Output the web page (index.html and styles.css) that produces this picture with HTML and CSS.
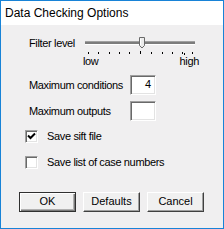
FILE: index.html
```html
<!DOCTYPE html>
<html>
<head>
<meta charset="utf-8">
<link rel="stylesheet" href="styles.css">
</head>
<body>
<div class="window">
  <div class="titlebar">Data Checking Options</div>
  <div class="body">
    <div class="filter-row">
      <span class="label filter-label">Filter level</span>
      <svg class="slider" width="112" height="20" viewBox="0 0 112 20">
        <rect x="0" y="6" width="110" height="1" fill="#a0a0a0"/>
        <rect x="0" y="7" width="110" height="2" fill="#7c7c7c"/>
        <rect x="0" y="9" width="110" height="1" fill="#ffffff"/>
        <g fill="#000">
          <rect x="3" y="17" width="1" height="2"/>
          <rect x="13" y="17" width="1" height="2"/>
          <rect x="24" y="17" width="1" height="2"/>
          <rect x="34" y="17" width="1" height="2"/>
          <rect x="44" y="17" width="1" height="2"/>
          <rect x="55" y="16" width="1" height="3"/>
          <rect x="66" y="17" width="1" height="2"/>
          <rect x="77" y="17" width="1" height="2"/>
          <rect x="87" y="17" width="1" height="2"/>
          <rect x="97" y="17" width="1" height="2"/>
          <rect x="99" y="18" width="1" height="2"/>
          <rect x="107" y="17" width="1" height="2"/>
        </g>
        <path d="M54.5,2.5 H59.5 V10.5 L57,13 L54.5,10.5 Z" fill="#ececec" stroke="#6a6a6a" stroke-width="1"/>
        <path d="M55.5,3.5 V10" stroke="#ffffff" stroke-width="1"/>
      </svg>
    </div>
    <div class="scale-labels">
      <span class="label">low</span>
      <span class="label">high</span>
    </div>
    <div class="field-row first">
      <span class="label field-label">Maximum conditions</span>
      <div class="textbox">4</div>
    </div>
    <div class="field-row">
      <span class="label field-label">Maximum outputs</span>
      <div class="textbox"></div>
    </div>
    <div class="check-row first">
      <span class="checkbox">
        <svg width="9" height="9" viewBox="0 0 9 9"><path d="M1,3.5 L3.5,6 L8,1.5" stroke="#000" stroke-width="2" fill="none"/></svg>
      </span>
      <span class="label">Save sift file</span>
    </div>
    <div class="check-row second">
      <span class="checkbox"></span>
      <span class="label">Save list of case numbers</span>
    </div>
    <div class="buttons">
      <div class="button default">OK</div>
      <div class="button">Defaults</div>
      <div class="button">Cancel</div>
    </div>
  </div>
</div>
</body>
</html>
```

FILE: styles.css
```css
html, body {
  margin: 0;
  padding: 0;
  background: #f0f0f0;
}

.window {
  width: 224px;
  height: 229px;
  box-sizing: border-box;
  border: 1px solid #1883d7;
  display: flex;
  flex-direction: column;
  font-family: "Liberation Sans", Arial, sans-serif;
}

.titlebar {
  height: 24px;
  line-height: 24px;
  background: #ffffff;
  color: #000;
  font-size: 12px;
  padding-left: 4px;
  flex: none;
}

.body {
  flex: 1;
  background: #f0eff0;
  padding-left: 24px;
  display: flex;
  flex-direction: column;
}

.label {
  font-size: 11px;
  line-height: 13px;
  letter-spacing: -0.35px;
  color: #000;
  white-space: nowrap;
}

.filter-row {
  margin-top: 10px;
  display: flex;
  align-items: flex-start;
  height: 20px;
}

.filter-label {
  margin-top: 2px;
  margin-left: 4px;
  width: 56px;
}

.slider {
  display: block;
}

.scale-labels {
  margin-left: 58px;
  width: 116px;
  display: flex;
  justify-content: space-between;
  height: 13px;
}

.field-row {
  display: grid;
  grid-template-columns: 101px 26px;
  align-items: center;
  height: 20px;
  margin-top: 6px;
  margin-left: 4px;
}

.field-row.first {
  margin-top: 7px;
}

.textbox {
  height: 20px;
  box-sizing: border-box;
  background: #fff;
  border-top: 1px solid #a0a0a0;
  border-left: 1px solid #a0a0a0;
  border-right: 1px solid #ffffff;
  border-bottom: 1px solid #ffffff;
  box-shadow: inset 1px 1px 0 #696969, inset -1px -1px 0 #e3e3e3;
  font-size: 11px;
  line-height: 17px;
  text-align: right;
  padding-right: 4px;
}

.check-row {
  display: flex;
  align-items: center;
  height: 13px;
}

.check-row.first {
  margin-top: 9px;
}

.check-row.second {
  margin-top: 13px;
}

.checkbox {
  width: 13px;
  height: 13px;
  box-sizing: border-box;
  background: #fff;
  border-top: 1px solid #a0a0a0;
  border-left: 1px solid #a0a0a0;
  border-right: 1px solid #ffffff;
  border-bottom: 1px solid #ffffff;
  box-shadow: inset 1px 1px 0 #696969, inset -1px -1px 0 #e3e3e3;
  margin-right: 9px;
  display: flex;
  align-items: center;
  justify-content: center;
  flex: none;
}

.checkbox svg {
  display: block;
}

.buttons {
  margin-top: 23px;
  margin-left: -6px;
  display: flex;
  gap: 7px;
}

.button {
  width: 57px;
  height: 20px;
  box-sizing: border-box;
  background: #f0f0f0;
  border-top: 1px solid #ffffff;
  border-left: 1px solid #ffffff;
  border-right: 1px solid #404040;
  border-bottom: 1px solid #404040;
  box-shadow: inset -1px -1px 0 #a0a0a0;
  font-size: 11px;
  line-height: 17px;
  text-align: center;
  color: #000;
}

.button.default {
  border: 1px solid #303030;
  box-shadow: inset 1px 1px 0 #ffffff, inset -1px -1px 0 #7a7a7a, inset -2px -2px 0 #b0b0b0;
}
```
